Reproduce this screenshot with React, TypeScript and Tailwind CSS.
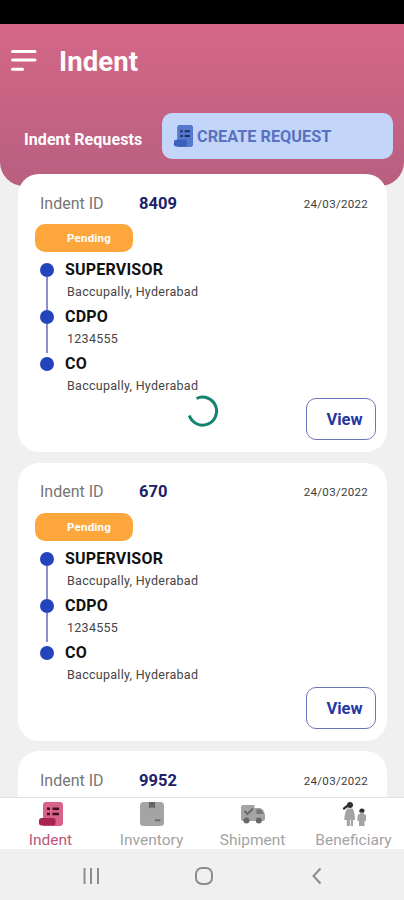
const FONT = { fontFamily: "Roboto, 'Liberation Sans', sans-serif" };

const steps = [
  { role: "SUPERVISOR", detail: "Baccupally, Hyderabad", height: "h-[47px]", line: "h-[33px]" },
  { role: "CDPO", detail: "1234555", height: "h-[47px]", line: "h-[29px]" },
  { role: "CO", detail: "Baccupally, Hyderabad", height: "h-[46px]", line: "" },
];

const indents = [
  { id: "8409", date: "24/03/2022", status: "Pending", steps },
  { id: "670", date: "24/03/2022", status: "Pending", steps },
  { id: "9952", date: "24/03/2022", status: "", steps: [] },
];

function ScrollIcon({ body, roll, ink, className }: { body: string; roll: string; ink: string; className: string }) {
  return (
    <svg viewBox="0 0 24 24" className={className} preserveAspectRatio="none">
      <path d="M7 0H21a3 3 0 0 1 3 3v18a3 3 0 0 1-3 3H4V3a3 3 0 0 1 3-3z" fill={body} />
      <rect x="0" y="16" width="16.500" height="7.500" rx="2.500" fill={roll} />
      <path d="M8 6.800h3M8 12h3M13.500 6.800H20M13.500 12H20" stroke={ink} strokeWidth="2.400" />
    </svg>
  );
}

function BoxIcon() {
  return (
    <svg viewBox="0 0 24 24" className="size-6">
      <rect x="0" y="0" width="24" height="24" rx="3.500" fill="#a4a4a4" />
      <path d="M9 0h6v6.500l-1.500-1h-3L9 6.500z" fill="#656565" />
      <path d="M15 18.300h5.500" stroke="#656565" strokeWidth="1.800" />
    </svg>
  );
}

function TruckIcon() {
  return (
    <svg viewBox="0 0 24 19" className="h-[19px] w-6">
      <path d="M2 0h11.500v3H19q4 1 5 7v4q0 2-2 2H2q-2 0-2-2V2q0-2 2-2z" fill="#a4a4a4" />
      <path d="M15.500 4.200h3q3 .5 4 4.800h-7z" fill="#777" />
      <path d="M3.500 6l3 3 5.500-5.500" fill="none" stroke="#686868" strokeWidth="2" />
      <circle cx="5.500" cy="15.600" r="3" fill="#686868" />
      <circle cx="17.800" cy="15.600" r="3" fill="#686868" />
    </svg>
  );
}

function FamilyIcon() {
  return (
    <svg viewBox="0 0 24 24" className="size-6">
      <g fill="#a4a4a4">
        <path d="M5.500 6.500h5q2.500 3.500 2.500 11.500h-2v6H8.800v-6h-.9v6H4.700v-6H2.200Q2.500 10 5.500 6.500z" />
        <path d="M18 12h4q2 0 2 2v5h-1.500v5h-5.500v-5h-1.500v-5q0-2 2.500-2z" />
        <circle cx="19.900" cy="10" r="2.400" />
      </g>
      <circle cx="8" cy="3" r="3" fill="#303030" />
      <path d="M2 6.500L6 3.500" stroke="#303030" strokeWidth="2.200" strokeLinecap="round" />
      <path d="M17.200 9.500q0-3 2.700-3t2.700 3q-1 1-2.700 1t-2.700-1z" fill="#303030" />
    </svg>
  );
}

const tabs = [
  { label: "Indent", icon: <ScrollIcon body="#d9628a" roll="#a92355" ink="#3a0f20" className="size-6" />, active: true },
  { label: "Inventory", icon: <BoxIcon />, active: false },
  { label: "Shipment", icon: <TruckIcon />, active: false },
  { label: "Beneficiary", icon: <FamilyIcon />, active: false },
];

function IndentCard({ indent }: { indent: (typeof indents)[number] }) {
  return (
    <article className={`w-[369px] shrink-0 bg-white pl-[17px] pr-[11px] pt-[19px] ${indent.status ? "h-[278px] rounded-[21px]" : "h-[50px] rounded-t-[21px]"}`}>
      <div className="flex h-5 items-center pl-[5px] pr-2 leading-5">
        <span className="w-[99px] pt-px text-[16px] text-[#767676]">Indent ID</span>
        <span className="flex-1 pt-px text-[16.500px] font-bold text-[#1b2268]">{indent.id}</span>
        <span className="pt-px text-[11.500px] tracking-[0.3px] text-[#3c3c3c]">{indent.date}</span>
      </div>
      {indent.status && (
        <>
          <div className="mt-[11px] flex h-7 w-[98px] items-center justify-center rounded-[10px] bg-[#fda63c] pl-[10px] pt-[2px] text-[11.500px] font-bold tracking-[0.2px] text-white">
            {indent.status}
          </div>
          <div className="mt-[7px] pl-[5px]">
            {indent.steps.map((s) => (
              <div key={s.role} className={`flex gap-[11px] ${s.height}`}>
                <div className="flex w-[14px] flex-col items-center pt-[4px]">
                  <span className="size-[14px] shrink-0 rounded-full bg-[#2444bd]" />
                  {s.line && <span className={`w-[1.500px] shrink-0 bg-[#8b8fcb] ${s.line}`} />}
                </div>
                <div>
                  <p className="text-[16px] font-bold leading-[22px] tracking-[0.2px] text-[#111]">{s.role}</p>
                  <p className="pl-[2px] text-[12.500px] leading-[22px] tracking-[0.280px] text-[#454545]">{s.detail}</p>
                </div>
              </div>
            ))}
          </div>
          <button className="-mt-px ml-auto flex h-[42px] w-[70px] items-center justify-center rounded-[10px] border border-[#6e73b8] pl-[7px] pt-[3px] text-[16.500px] font-bold text-[#24389f]">
            View
          </button>
        </>
      )}
    </article>
  );
}

export default function App() {
  return (
    <div className="relative flex h-[900px] w-[404px] flex-col overflow-hidden bg-[#f0f0f0]" style={FONT}>
      <div className="h-6 shrink-0 bg-black" />
      <header className="h-[162px] shrink-0 rounded-b-[24px] bg-linear-to-b from-[#d56787] to-[#b85f80] text-white">
        <div className="flex items-center pl-[11px] pt-[19px]">
          <svg viewBox="0 0 26 24" className="h-6 w-[26px]" stroke="white" strokeWidth="3" strokeLinecap="round">
            <path d="M1.500 1.500h22.500M1.500 10h22.500M1.500 19.200h10" />
          </svg>
          <h1 className="ml-[22px] pt-px text-[27.500px] font-bold leading-9 tracking-[0.1px]">Indent</h1>
        </div>
        <div className="mt-[33px] flex items-center justify-between pl-6 pr-[11px]">
          <h2 className="pt-[7px] text-[16px] font-bold tracking-[0.080px]">Indent Requests</h2>
          <button className="flex h-[46px] w-[231px] items-center rounded-[10px] bg-[#c3d6fa] pl-3 text-[16.300px] font-bold text-[#5872bf]">
            <ScrollIcon body="#5478cc" roll="#3a5fbd" ink="#1d2b60" className="mr-[4px] h-[22px] w-[19px]" />
            <span className="pt-[3px]">CREATE REQUEST</span>
          </button>
        </div>
      </header>
      <main className="-mt-3 flex min-h-0 flex-1 flex-col gap-[10.500px] overflow-hidden pl-[18px]">
        {indents.map((item) => (
          <IndentCard key={item.id} indent={item} />
        ))}
      </main>
      <nav className="flex h-[52px] shrink-0 border-t border-[#e2e2e2] bg-white">
        {tabs.map((t) => (
          <div key={t.label} className="flex w-[101px] flex-col items-center pt-[4px]">
            <div className="flex h-6 shrink-0 items-center">{t.icon}</div>
            <span className={`mt-[4px] text-[15.500px] leading-5 ${t.active ? "text-[#c0567b]" : "text-[#a3a3a3]"}`}>{t.label}</span>
          </div>
        ))}
      </nav>
      <footer className="flex h-[51px] shrink-0 items-center bg-[#f0f0f0] pl-[83px] pt-[2px]">
        <svg viewBox="0 0 242 20" className="h-5 w-[242px]" fill="none" stroke="#8c8c8c" strokeWidth="2">
          <path d="M1.500 2v16M8 2v16M15 2v16" />
          <rect x="113" y="2" width="16" height="16" rx="6" />
          <path d="M237.500 2.500l-7 7.500 7 7.500" />
        </svg>
      </footer>
      {/* loading spinner over the list */}
      <svg viewBox="0 0 32 32" className="absolute left-[187px] top-[395px] size-8" fill="none" stroke="#12836f" strokeWidth="3">
        <path d="M9.500 3.500A14 14 0 1 1 2.300 20.500" />
      </svg>
    </div>
  );
}
